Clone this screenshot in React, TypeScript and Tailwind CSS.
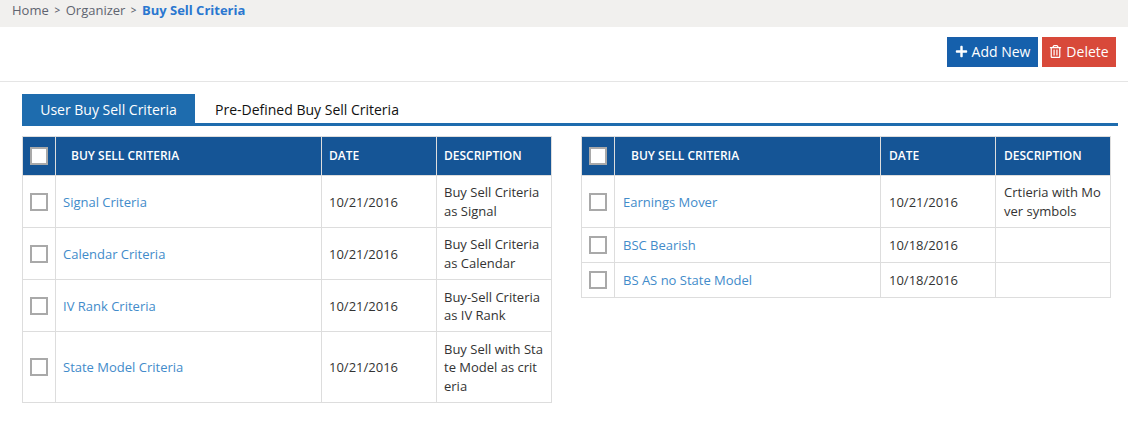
import { FaPlus, FaRegTrashAlt } from "react-icons/fa"

type Row = {
  name: string
  date: string
  description: string[]
  cellY?: string
}

const leftRows: Row[] = [
  { name: "Signal Criteria", date: "10/21/2016", description: ["Buy Sell Criteria", "as Signal"] },
  { name: "Calendar Criteria", date: "10/21/2016", description: ["Buy Sell Criteria", "as Calendar"], cellY: "pt-[7px] pb-[6.8px]" },
  { name: "IV Rank Criteria", date: "10/21/2016", description: ["Buy-Sell Criteria", "as IV Rank"], cellY: "pt-[7.2px] pb-[6.6px]" },
  { name: "State Model Criteria", date: "10/21/2016", description: ["Buy Sell with Sta", "te Model as crit", "eria"], cellY: "pt-[7.4px] pb-[7px]" },
]

const rightRows: Row[] = [
  { name: "Earnings Mover", date: "10/21/2016", description: ["Crtieria with Mo", "ver symbols"] },
  { name: "BSC Bearish", date: "10/18/2016", description: [] },
  { name: "BS AS no State Model", date: "10/18/2016", description: [] },
]

function Checkbox() {
  return <div className="mx-auto h-[18px] w-[18px] border-2 border-[#a9a9a9] bg-white" />
}

function CriteriaTable({ rows, inset = false }: { rows: Row[]; inset?: boolean }) {
  // the right table sits half a pixel over in the original, so its text lands 1px later
  const pad = inset ? "pl-[8px] pr-[6px]" : "px-[7px]"

  return (
    <table className="w-[529px] table-fixed border-collapse text-[13px] leading-[18.57px]">
      <colgroup>
        <col className="w-[33px]" />
        <col className="w-[266px]" />
        <col className="w-[115px]" />
        <col className="w-[115px]" />
      </colgroup>

      {/* HEAD */}
      <thead>
        <tr className="h-[39px] bg-[#155596] text-left text-[12px] font-semibold text-white">
          <th className="border border-[#dddddd] p-0">
            <Checkbox />
          </th>
          <th className={`border border-[#dddddd] py-0 pr-2 font-semibold ${inset ? "pl-[16px]" : "pl-[15px]"}`}>BUY SELL CRITERIA</th>
          <th className={`border border-[#dddddd] py-0 font-semibold ${pad}`}>DATE</th>
          <th className={`border border-[#dddddd] py-0 font-semibold ${pad}`}>DESCRIPTION</th>
        </tr>
      </thead>

      {/* ROWS */}
      <tbody>
        {rows.map((row) => (
          <tr key={row.name} className="h-[35px]">
            <td className="border border-[#dddddd] p-0">
              <Checkbox />
            </td>
            <td className={`border border-[#dddddd] py-0 text-[#428bca] ${pad}`}>{row.name}</td>
            <td className={`border border-[#dddddd] py-0 text-[#333333] ${pad}`}>{row.date}</td>
            <td className={`border border-[#dddddd] whitespace-nowrap text-[#333333] ${pad} ${row.cellY ?? "py-[7px]"}`}>
              {row.description.map((line) => (
                <div key={line}>{line}</div>
              ))}
            </td>
          </tr>
        ))}
      </tbody>
    </table>
  )
}

export default function App() {
  return (
    <div className="h-[428px] w-[1128px] overflow-hidden bg-white font-['Open_Sans',sans-serif] text-[13px] text-[#333333]">

      {/* BREADCRUMB */}
      <div className="flex h-[27px] items-start gap-[5px] bg-[#f1f0ee] pl-3 pt-[1px] leading-[18px] text-[#5f6470]">
        <span>Home</span>
        <span className="w-[7px] text-center text-[10px] font-semibold">&gt;</span>
        <span>Organizer</span>
        <span className="w-[6.5px] text-center text-[10px] font-semibold">&gt;</span>
        <span className="font-bold text-[#2a77d0]">Buy Sell Criteria</span>
      </div>

      {/* TOOLBAR */}
      <div className="flex h-[55px] justify-end gap-1 border-b border-[#e5e5e5] pr-3 pt-[10px]">
        <button className="flex h-[30px] w-[91px] items-center justify-center gap-[4px] border border-[#1a5ea8] bg-[#1560ac] pb-[1px] text-[14px] text-white">
          <FaPlus className="h-[13px] w-[13px]" />
          <span>Add New</span>
        </button>
        <button className="flex h-[30px] w-[74px] items-center justify-center gap-[4px] bg-[#d8493a] pb-[1px] text-[14px] text-white">
          <FaRegTrashAlt className="h-[13px] w-[13px]" />
          <span>Delete</span>
        </button>
      </div>

      {/* TABS */}
      <div className="mx-[22px] mt-3 flex h-[32px] w-[1096px] border-b-[3px] border-[#1e6cae] text-[14px] leading-[29px]">
        <div className="h-[29px] w-[173px] bg-[#1e6cae] pt-[1px] text-center text-white">User Buy Sell Criteria</div>
        <div className="pl-5 pt-[1px] text-[#111111]">Pre-Defined Buy Sell Criteria</div>
      </div>

      {/* TABLES */}
      <div className="ml-[22px] mt-[10.3px] flex items-start gap-[29px]">
        <CriteriaTable rows={leftRows} />
        <CriteriaTable rows={rightRows} inset />
      </div>

    </div>
  )
}
